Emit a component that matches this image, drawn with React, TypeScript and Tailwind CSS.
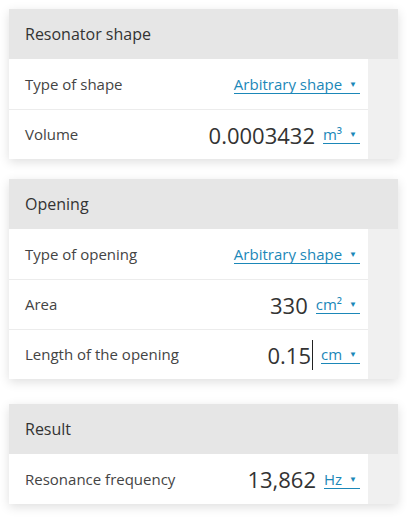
import React from "react"

type Row = {
  label: string
  value?: string
  link: string
  caret?: boolean
}

type Section = {
  title: string
  rows: Row[]
}

const sections: Section[] = [
  {
    title: "Resonator shape",
    rows: [
      { label: "Type of shape", link: "Arbitrary shape" },
      { label: "Volume", value: "0.0003432", link: "m³" },
    ],
  },
  {
    title: "Opening",
    rows: [
      { label: "Type of opening", link: "Arbitrary shape" },
      { label: "Area", value: "330", link: "cm²" },
      { label: "Length of the opening", value: "0.15", link: "cm", caret: true },
    ],
  },
  {
    title: "Result",
    rows: [{ label: "Resonance frequency", value: "13,862", link: "Hz" }],
  },
]

function UnitLink({ text }: { text: string }) {
  return (
    <span className="ml-[8px] inline-flex items-center border-b border-[#1b87b8] text-[15px] leading-[18px] text-[#1b87b8]">
      {text}
      <span className="ml-[7px] mr-[3px] text-[8px] leading-none">▼</span>
    </span>
  )
}

function Card({ section, className }: { section: Section; className?: string }) {
  return (
    <div className={"bg-white shadow-[0_3px_10px_rgba(0,0,0,0.13)] " + (className ?? "")}>
      <div className="flex h-[50px] items-center bg-[#e6e6e6] px-[16px] text-[16px] text-[#333]">
        {section.title}
      </div>
      <div className="flex">
        <div className="w-[359px] bg-white">
          {section.rows.map((row, i) => (
            <div
              key={row.label}
              className={
                "flex h-[50px] items-center justify-between pl-[16px] pr-[8px] " +
                (i > 0 ? "border-t border-[#ececec]" : "")
              }
            >
              <span className="text-[15px] text-[#444]">{row.label}</span>
              <span className="flex items-center">
                {row.value && (
                  <span className="flex items-center text-[22px] leading-none text-[#333]">
                    {row.value}
                    {row.caret && <span className="ml-[1px] inline-block h-[30px] w-[1px] bg-[#222]" />}
                  </span>
                )}
                <UnitLink text={row.link} />
              </span>
            </div>
          ))}
        </div>
        <div className="flex-1 bg-[#f0f0f0]" />
      </div>
    </div>
  )
}

export default function App() {
  return (
    <div
      className="min-h-[517px] bg-white px-[9px] pt-[9px]"
      style={{ fontFamily: '"Open Sans", "Noto Sans", sans-serif' }}
    >
      <Card section={sections[0]} />
      <Card section={sections[1]} className="mt-[20px]" />
      <Card section={sections[2]} className="mt-[25px]" />
    </div>
  )
}
